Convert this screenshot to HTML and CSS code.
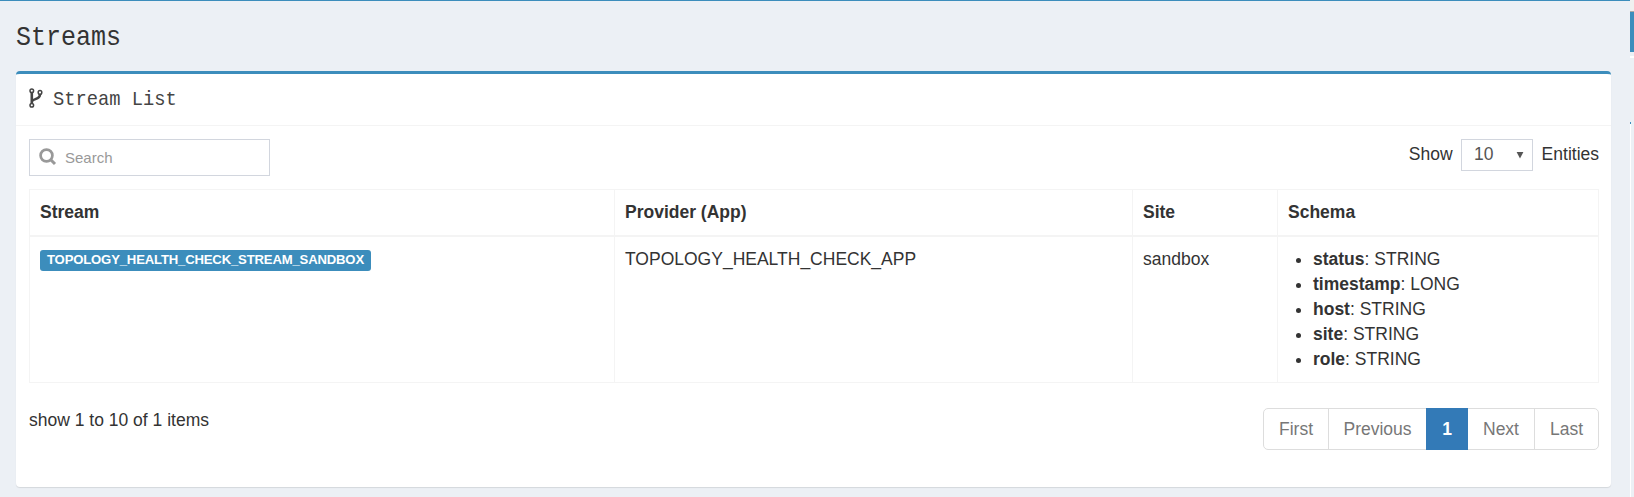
FILE: index.html
```html
<!DOCTYPE html>
<html lang="en">
<head>
<meta charset="utf-8">
<title>Streams</title>
<link rel="stylesheet" href="styles.css">
</head>
<body>
<div class="page">
  <main class="content">
    <h1 class="page-title">Streams</h1>
    <section class="box">
      <header class="box-header">
        <svg class="fork-icon" width="14" height="20" viewBox="0 0 14 20" fill="none" stroke="#444">
          <circle cx="2.8" cy="2.700" r="1.800" stroke-width="1.500"/>
          <circle cx="2.800" cy="17.200" r="1.800" stroke-width="1.500"/>
          <circle cx="11" cy="4.400" r="1.800" stroke-width="1.500"/>
          <path d="M2.800 4.500v10.800M11 6.200c0 5.800-7.200 4-8.200 7.500" stroke-width="2.600"/>
        </svg>
        <h3 class="box-title">Stream List</h3>
      </header>
      <div class="box-body">
        <div class="toolbar">
          <label class="search">
            <svg width="18" height="18" viewBox="0 0 18 18" fill="none" stroke="#999">
              <circle cx="7.500" cy="7.500" r="5.900" stroke-width="2.700"/>
              <path d="M11.500 11.500l4.500 4.500" stroke-width="3"/>
            </svg>
            <input class="search-input" type="text" placeholder="Search">
          </label>
          <div class="page-size">
            <span>Show</span>
            <span class="select"><span>10</span><svg width="8" height="7" viewBox="0 0 8 7"><path d="M.6 0h6.800L4 6.600z" fill="#555"/></svg></span>
            <span>Entities</span>
          </div>
        </div>
        <table class="table">
          <colgroup><col class="col-stream"><col class="col-app"><col class="col-site"><col></colgroup>
          <thead>
            <tr><th>Stream</th><th>Provider (App)</th><th>Site</th><th>Schema</th></tr>
          </thead>
          <tbody>
            <tr>
              <td><span class="tag">TOPOLOGY_HEALTH_CHECK_STREAM_SANDBOX</span></td>
              <td>TOPOLOGY_HEALTH_CHECK_APP</td>
              <td>sandbox</td>
              <td>
                <ul class="schema">
                  <li><b>status</b>: STRING</li>
                  <li><b>timestamp</b>: LONG</li>
                  <li><b>host</b>: STRING</li>
                  <li><b>site</b>: STRING</li>
                  <li><b>role</b>: STRING</li>
                </ul>
              </td>
            </tr>
          </tbody>
        </table>
        <footer class="table-footer">
          <span class="summary">show 1 to 10 of 1 items</span>
          <nav class="pagination">
            <a class="first">First</a><a class="previous">Previous</a><a class="active">1</a><a class="next">Next</a><a class="last">Last</a>
          </nav>
        </footer>
      </div>
    </section>
  </main>
  <aside class="edge">
    <div class="edge-top"></div>
    <div class="edge-bar"></div>
    <div class="edge-gap"></div>
    <div class="edge-line"></div>
    <div class="edge-space"></div>
    <div class="edge-panel"></div>
  </aside>
</div>
</body>
</html>
```

FILE: styles.css
```css
* { box-sizing: border-box; }
body {
  margin: 0;
  background: #ecf0f5;
  color: #333;
  font: 17.5px/25px "Liberation Sans", Arial, sans-serif;
  overflow: hidden;
}
.page { display: flex; height: 497px; }
.content { flex: 1; padding: 18px 19px 0 16px; border-top: 1px solid #3c8dbc; }
.page-title {
  margin: 0;
  height: 52px;
  font: 25px/38px "Liberation Mono", monospace;
  transform: scaleY(1.12);
  transform-origin: 0 19px;
}
.box {
  height: 416px;
  background: #fff;
  border-top: 3px solid #3c8dbc;
  border-radius: 4px;
  box-shadow: 0 1px 1px rgba(0, 0, 0, .1);
}
.box-header {
  display: flex;
  align-items: flex-start;
  gap: 10px;
  height: 52px;
  padding: 13px 13px 0;
  border-bottom: 1px solid #f4f4f4;
  color: #444;
}
.fork-icon { margin-top: 1px; }
.box-title {
  margin: 0;
  font: 18.75px/25px "Liberation Mono", monospace;
  transform: scaleY(1.12);
}
.box-body { padding: 13px 12px 0 13px; }
.toolbar { display: flex; justify-content: space-between; align-items: flex-start; height: 50px; }
.search {
  display: flex;
  align-items: center;
  gap: 8px;
  width: 241px;
  height: 37px;
  padding: 0 0 1px 9px;
  border: 1px solid #d2d6de;
}
.search-input {
  width: 180px;
  padding: 0;
  border: 0;
  background: none;
  font: 15px "Liberation Sans", Arial, sans-serif;
}
.search-input::placeholder { color: #999; }
.page-size { display: flex; align-items: center; gap: 8.5px; height: 30px; }
.select {
  display: flex;
  align-items: center;
  justify-content: space-between;
  width: 72px;
  height: 32px;
  margin-top: 2px;
  padding: 0 8px 1px 12px;
  border: 1px solid #d2d6de;
  color: #555;
}
.select svg { margin-top: 2px; }
.table { width: 1570px; table-layout: fixed; border-collapse: separate; border-spacing: 0; border: solid #f4f4f4; border-width: 1px 0 0 1px; }
.col-stream { width: 585px; }
.col-app { width: 518px; }
.col-site { width: 145px; }
.table th, .table td { padding: 10px; text-align: left; vertical-align: top; border: solid #f4f4f4; border-width: 0 1px 1px 0; }
.table th { height: 47px; border-bottom-width: 2px; }
.table td { height: 146px; }
.tag {
  display: inline-block;
  height: 21px;
  margin-top: 3px;
  padding: 0 7px;
  border-radius: 3px;
  background: #3c8dbc;
  color: #fff;
  font: bold 13.125px/20px "Liberation Sans", Arial, sans-serif;
  letter-spacing: -.165px;
  vertical-align: top;
}
.schema { margin: 0; padding-left: 25px; }
.table-footer { display: flex; justify-content: space-between; padding-top: 25px; }
.pagination { display: flex; height: 42px; border: 1px solid #ddd; border-radius: 5px; color: #777; line-height: 40px; text-align: center; }
.pagination a { border-right: 1px solid #ddd; }
.first { width: 65px; }
.previous { width: 98px; }
.pagination .active { width: 42px; margin: -1px 0 -1px -1px; border: 0; background: #337ab7; color: #fff; font-weight: bold; line-height: 42px; }
.next { width: 67px; }
.pagination .last { width: 63px; border: 0; }
.edge { display: flex; flex-direction: column; width: 4px; }
.edge-top { height: 12px; background: #f0f0f0; border-bottom: 1px solid #aaa; }
.edge-bar { height: 40px; background: #3c8dbc; }
.edge-gap { height: 4px; }
.edge-line { height: 2px; background: #fff; }
.edge-space { height: 64px; }
.edge-panel { flex: 1; width: 1px; background: #fff; border-top: 2px solid #3c8dbc; }
```
